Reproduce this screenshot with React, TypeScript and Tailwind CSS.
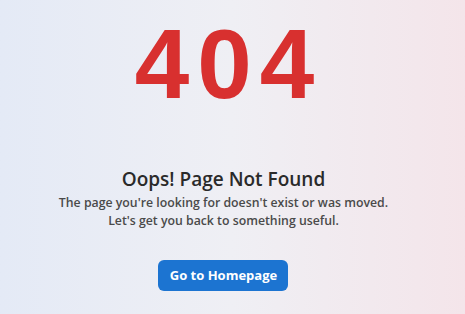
export default function App() {
  return (
    <div className="w-[465px] h-[314px] overflow-hidden bg-gradient-to-r from-[#e4eaf6] via-[#efeff4] to-[#f4e5ea] flex flex-col items-center pr-[18px]">
      <div
        className="mt-[14px] text-[98px] leading-[100px] font-bold text-[#d8302f] tracking-[8px] pl-[10px]"
        style={{ fontFamily: '"Liberation Sans", Arial, sans-serif' }}
      >
        404
      </div>
      <div style={{ fontFamily: '"Open Sans", sans-serif' }} className="flex flex-col items-center">
        <h1 className="mt-[53px] text-[19px] leading-[24px] font-semibold text-[#2a2a2a]">
          Oops! Page Not Found
        </h1>
        <p className="mt-[3px] text-[12.3px] leading-[18px] font-semibold text-[#4a4a4a] text-center">
          The page you're looking for doesn't exist or was moved.
          <br />
          Let's get you back to something useful.
        </p>
        <button className="mt-[30px] w-[130px] h-[31px] rounded-[6px] bg-[#1c74d1] text-white text-[13px] font-bold">
          Go to Homepage
        </button>
      </div>
    </div>
  );
}
